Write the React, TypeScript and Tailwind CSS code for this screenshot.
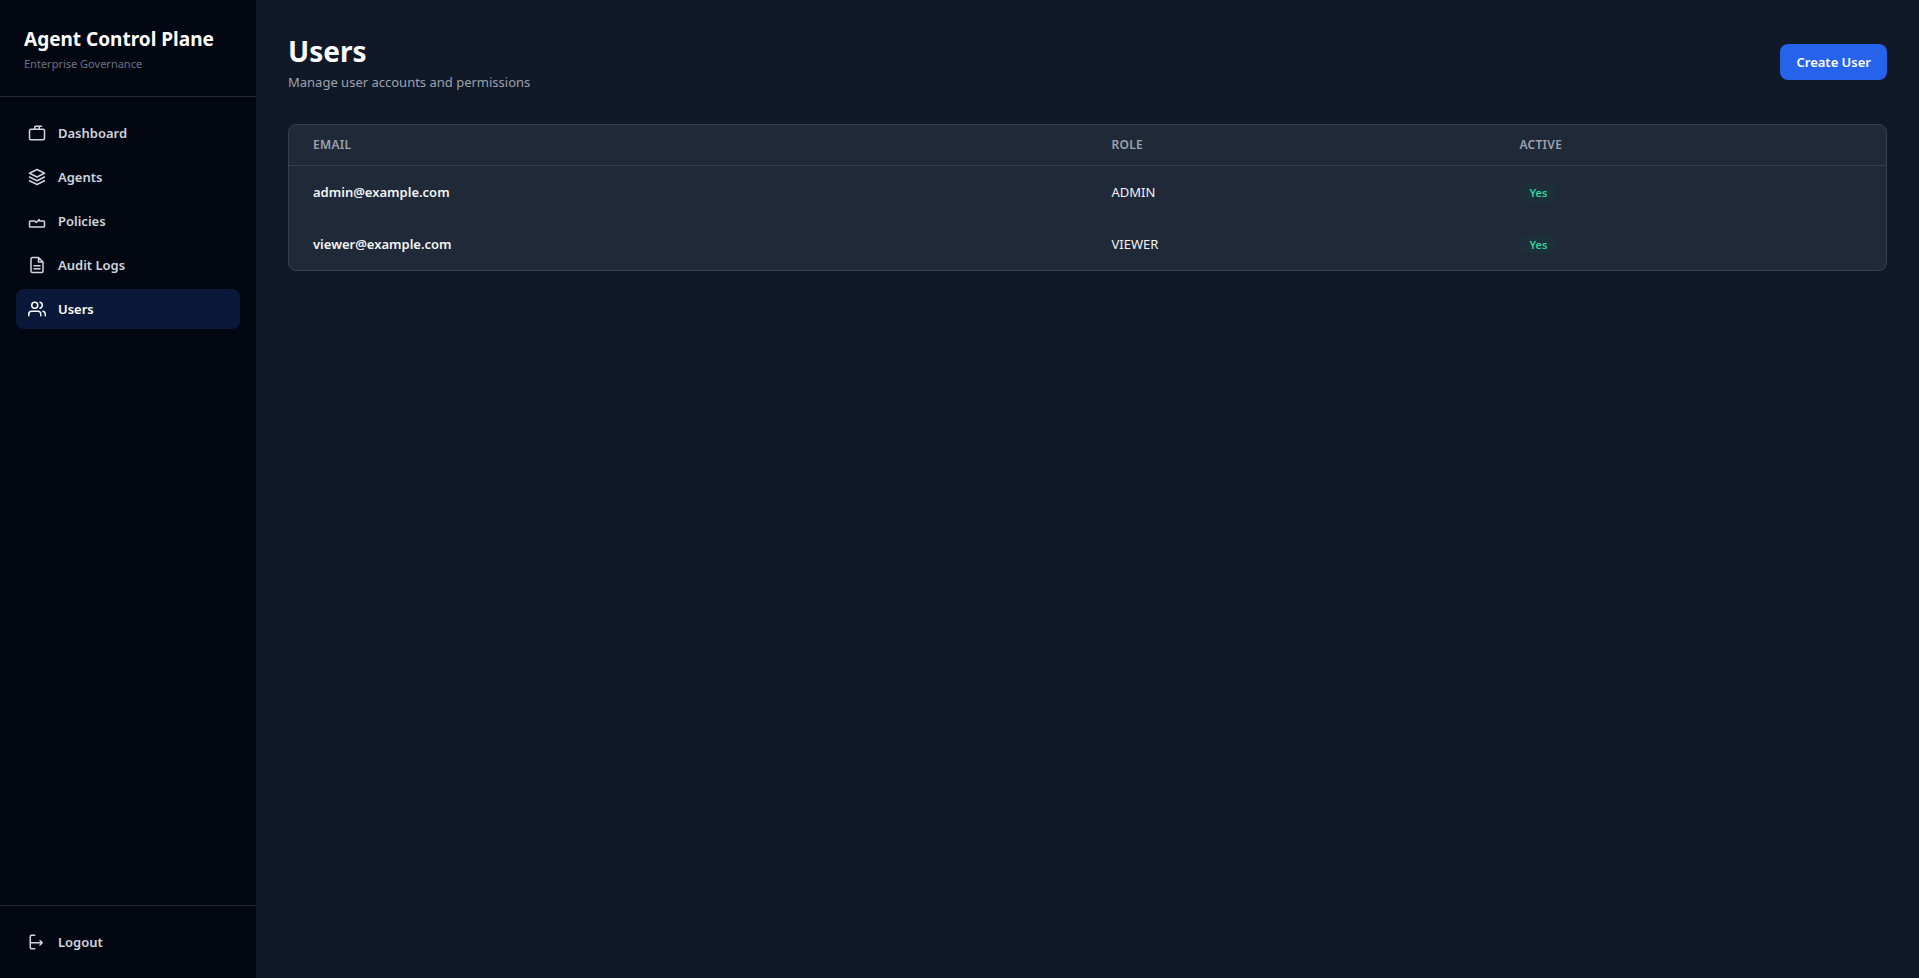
import React from 'react';

const navItems = [
    {
        label: 'Dashboard',
        icon: (
            <>
                <rect x="2" y="7" width="20" height="14" rx="2" />
                <path d="M9 7V4a1 1 0 0 1 1-1h8M15 3v4" />
            </>
        ),
    },
    {
        label: 'Agents',
        icon: <path d="M12 2L2 7l10 5 10-5-10-5zM2 17l10 5 10-5M2 12l10 5 10-5" />,
    },
    {
        label: 'Policies',
        icon: <path d="M9 12l2 2 4-4M9 12H3a1 1 0 0 0-1 1v6a1 1 0 0 0 1 1h18a1 1 0 0 0 1-1v-6a1 1 0 0 0-1-1h-6" />,
    },
    {
        label: 'Audit Logs',
        icon: <path d="M14 2H6a2 2 0 0 0-2 2v16a2 2 0 0 0 2 2h12a2 2 0 0 0 2-2V8zM14 2v6h6M16 13H8M16 17H8" />,
    },
    {
        label: 'Users',
        active: true,
        icon: (
            <>
                <path d="M17 21v-2a4 4 0 0 0-4-4H5a4 4 0 0 0-4 4v2M23 21v-2a4 4 0 0 0-3-3.87M16 3.13a4 4 0 0 1 0 7.75" />
                <circle cx="9" cy="7" r="4" />
            </>
        ),
    },
];

const users = [
    { email: 'admin@example.com', role: 'ADMIN', active: true },
    { email: 'viewer@example.com', role: 'VIEWER', active: true },
];

const Icon: React.FC<{ children: React.ReactNode }> = ({ children }) => (
    <svg
        className="w-[18px] h-[18px] shrink-0"
        viewBox="0 0 24 24"
        fill="none"
        stroke="currentColor"
        strokeWidth="2"
        strokeLinecap="round"
        strokeLinejoin="round"
        aria-hidden="true"
    >
        {children}
    </svg>
);

const Sidebar: React.FC = () => (
    <aside className="w-64 shrink-0 flex flex-col bg-[#030712]">
        <div className="p-6 border-b border-[#1f2937]">
            <div className="text-[19px] leading-[30px] font-bold text-white">Agent Control Plane</div>
            <p className="mt-0.5 text-[11px] leading-4 text-[#6b7280]">Enterprise Governance</p>
        </div>
        <nav className="flex-1 p-4 flex flex-col gap-1">
            {navItems.map((item) => (
                <a
                    key={item.label}
                    href="#"
                    aria-current={item.active ? 'page' : undefined}
                    className={`flex items-center gap-3 px-3 py-2.5 rounded-lg text-[13px] leading-5 font-semibold ${
                        item.active ? 'bg-[#0a1939] text-white' : 'text-[#d1d5db] hover:bg-[#111827]'
                    }`}
                >
                    <Icon>{item.icon}</Icon>
                    {item.label}
                </a>
            ))}
        </nav>
        <div className="p-4 border-t border-[#1f2937]">
            <button
                type="button"
                className="w-full flex items-center gap-3 px-3 py-2.5 rounded-lg text-[13px] leading-5 font-semibold text-[#d1d5db] hover:bg-[#111827]"
            >
                <Icon>
                    <path d="M9 21H5a2 2 0 0 1-2-2V5a2 2 0 0 1 2-2h4M16 16l3-3-3-3M19 13H3" />
                </Icon>
                Logout
            </button>
        </div>
    </aside>
);

const UsersPage: React.FC = () => (
    <main className="flex-1 min-w-0 p-8">
        <header className="mb-8 flex items-center justify-between">
            <div>
                <h1 className="text-[28px] leading-[38px] font-bold text-white">Users</h1>
                <p className="mt-0.5 text-[13px] leading-5 text-[#9ca3af]">Manage user accounts and permissions</p>
            </div>
            <button
                type="button"
                className="px-4 py-2 rounded-lg bg-[#2563eb] hover:bg-[#1d4ed8] text-[13px] leading-5 font-semibold text-white"
            >
                Create User
            </button>
        </header>

        <div className="overflow-hidden rounded-lg border border-[#374151] bg-[#1f2937]">
            <table className="w-full text-left text-[13px] leading-5 text-[#f3f4f6]">
                <thead>
                    <tr className="border-b border-[#374151] text-[12px] leading-4 uppercase tracking-wide text-[#9ca3af]">
                        <th className="w-1/2 px-6 py-3 font-semibold">Email</th>
                        <th className="px-6 py-3 font-semibold">Role</th>
                        <th className="px-6 py-3 font-semibold">Active</th>
                    </tr>
                </thead>
                <tbody>
                    {users.map((user) => (
                        <tr key={user.email}>
                            <td className="px-6 py-4 font-semibold">{user.email}</td>
                            <td className="px-6 py-4">{user.role}</td>
                            <td className="px-6 py-4">
                                <span className="rounded-full px-2.5 py-0.5 text-[11px] leading-4 font-semibold bg-[#1d3039] text-[#34d399]">
                                    {user.active ? 'Yes' : 'No'}
                                </span>
                            </td>
                        </tr>
                    ))}
                </tbody>
            </table>
        </div>
    </main>
);

const App: React.FC = () => (
    <div className="min-h-screen flex bg-[#111827] font-['Segoe_UI','Noto_Sans',sans-serif]">
        <Sidebar />
        <UsersPage />
    </div>
);

export default App;
